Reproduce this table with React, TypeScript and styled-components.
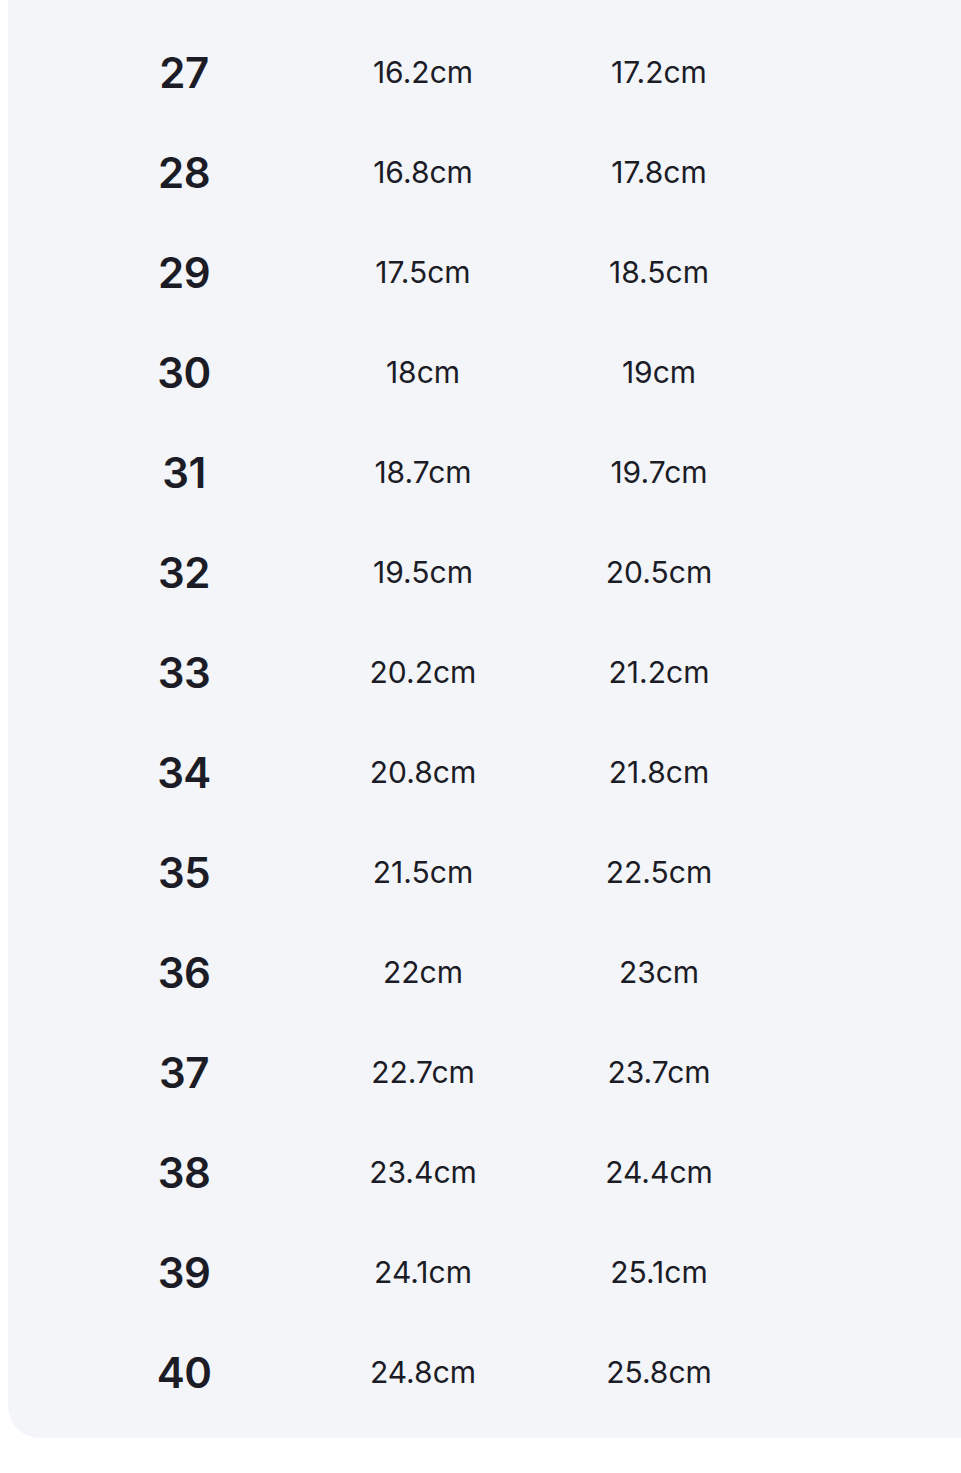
import React from "react";
import styled, { createGlobalStyle } from "styled-components";

const GlobalStyle = createGlobalStyle`
  html, body {
    margin: 0;
    padding: 0;
    background: #ffffff;
    overflow: hidden;
  }
  body {
    font-family: Inter, "Liberation Sans", sans-serif;
  }
`;

const Page = styled.div`
  width: 961px;
  height: 1473px;
  padding-left: 8px;
  box-sizing: border-box;
  overflow: hidden;
`;

const Panel = styled.div`
  width: 1000px;
  background: #f4f5f9;
  border-bottom-left-radius: 32px;
  padding: 22px 0 16px 56px;
  box-sizing: border-box;
`;

const Row = styled.div`
  display: grid;
  grid-template-columns: 240px 238px 234px;
  height: 100px;
  align-items: center;
  color: #1b1c26;
`;

const Size = styled.div`
  text-align: center;
  font-size: 42px;
  font-weight: 600;
  letter-spacing: -0.5px;
`;

const Length = styled.div`
  text-align: center;
  font-size: 30px;
  font-weight: 400;
`;

const rows: [number, string, string][] = [
  [27, "16.2cm", "17.2cm"],
  [28, "16.8cm", "17.8cm"],
  [29, "17.5cm", "18.5cm"],
  [30, "18cm", "19cm"],
  [31, "18.7cm", "19.7cm"],
  [32, "19.5cm", "20.5cm"],
  [33, "20.2cm", "21.2cm"],
  [34, "20.8cm", "21.8cm"],
  [35, "21.5cm", "22.5cm"],
  [36, "22cm", "23cm"],
  [37, "22.7cm", "23.7cm"],
  [38, "23.4cm", "24.4cm"],
  [39, "24.1cm", "25.1cm"],
  [40, "24.8cm", "25.8cm"],
];

const App = () => {
  return (
    <>
      <GlobalStyle />
      <Page>
        <Panel>
          {rows.map(([size, foot, inner]) => (
            <Row key={size}>
              <Size>{size}</Size>
              <Length>{foot}</Length>
              <Length>{inner}</Length>
            </Row>
          ))}
        </Panel>
      </Page>
    </>
  );
};

export default App;
